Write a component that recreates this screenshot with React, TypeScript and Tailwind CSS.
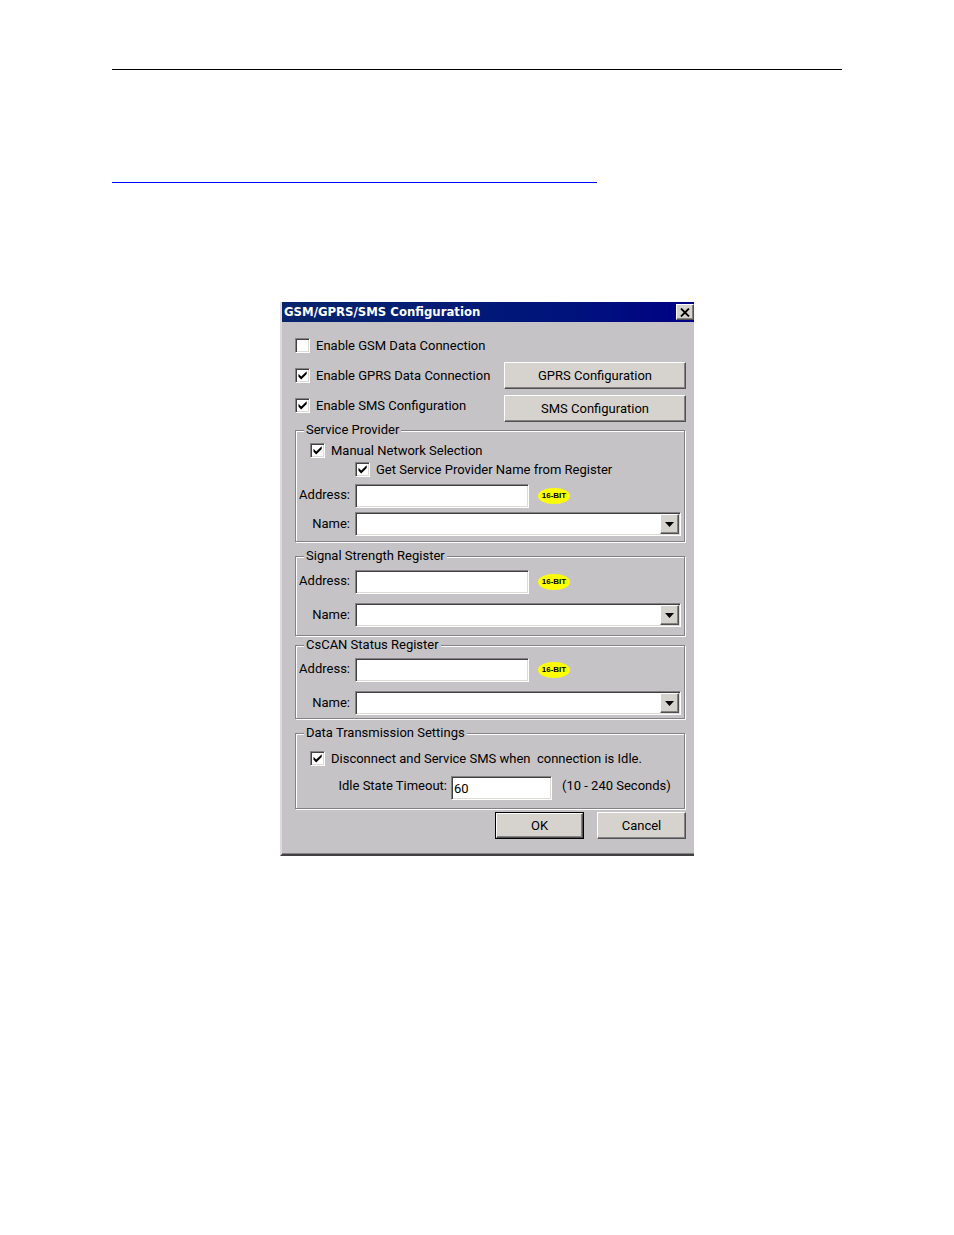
import React from "react";
import clsx from "clsx";

const SUNKEN =
  "border border-t-[#848284] border-l-[#848284] border-r-white border-b-white bg-white shadow-[inset_1px_1px_0_#424142,inset_-1px_-1px_0_#dedbd6]";
const RAISED =
  "border border-t-white border-l-white border-r-[#525152] border-b-[#525152] bg-[#d6d3ce] shadow-[inset_-1px_-1px_0_#848284]";

function Check({
  label,
  checked = false,
  className,
}: {
  label: string;
  checked?: boolean;
  className?: string;
}) {
  return (
    <label className={clsx("flex h-[19px] items-center gap-1.5 whitespace-pre", className)}>
      <span className="grid shrink-0 place-items-center">
        <input
          type="checkbox"
          defaultChecked={checked}
          className={clsx("peer col-start-1 row-start-1 size-[15px] appearance-none", SUNKEN)}
        />
        <svg
          viewBox="0 0 9 9"
          className="pointer-events-none invisible col-start-1 row-start-1 size-[9px] peer-checked:visible"
        >
          <path d="M0.5 2.8v3L3.2 8.4 8.7 3V0.2L3.2 5.5z" fill="#000" />
        </svg>
      </span>
      {label}
    </label>
  );
}

function PushButton({ children, className }: { children: React.ReactNode; className?: string }) {
  return (
    <button type="button" className={clsx("h-[27px]", RAISED, className)}>
      {children}
    </button>
  );
}

function Group({
  title,
  children,
  className,
}: {
  title: string;
  children: React.ReactNode;
  className?: string;
}) {
  return (
    <fieldset
      className={clsx(
        "mr-px min-w-0 border border-[#848284] pr-[3px] shadow-[inset_1px_1px_0_#fff,1px_1px_0_#fff]",
        className
      )}
    >
      <legend className="ml-2 bg-[#c6c3c6] px-0.5">{title}</legend>
      {children}
    </fieldset>
  );
}

function BitBadge() {
  return (
    <span className="ml-1 flex h-4 w-8 items-center justify-center rounded-[50%] bg-[#ffff00] font-['Liberation_Sans',Arial,sans-serif] text-[8px] leading-none font-bold">
      16-BIT
    </span>
  );
}

function RegisterFields({ id, className }: { id: string; className?: string }) {
  return (
    <div className={clsx("flex flex-col", className)}>
      <div className="flex h-6 items-center gap-[5px]">
        <label htmlFor={`${id}-address`} className="w-[54px] shrink-0 pb-0.5 text-right">
          Address:
        </label>
        <input
          id={`${id}-address`}
          type="text"
          className={clsx("h-6 w-[174px] px-1 outline-none", SUNKEN)}
        />
        <BitBadge />
      </div>
      <div className="flex h-6 items-center gap-[5px]">
        <label htmlFor={`${id}-name`} className="w-[54px] shrink-0 text-right">
          Name:
        </label>
        <div className="relative flex-1">
          <select
            id={`${id}-name`}
            className={clsx("block h-6 w-full appearance-none px-1 outline-none", SUNKEN)}
          />
          <span
            className={clsx(
              "pointer-events-none absolute inset-y-0.5 right-0.5 flex w-[19px] items-center justify-center",
              RAISED
            )}
          >
            <svg viewBox="0 0 9 5" className="h-[5px] w-[9px]">
              <path d="M0 0h9L4.5 5z" fill="#000" />
            </svg>
          </span>
        </div>
      </div>
    </div>
  );
}

function ConfigDialog() {
  return (
    <form className="w-[414px] border-b-2 border-l-2 border-b-[#424142] border-l-[#dedbde] bg-[#c6c3c6] pb-[15px] shadow-[inset_0_-1px_0_#848284]">
      <div className="flex h-5 items-center justify-between bg-linear-to-r from-[#08246b] to-[#000084] pl-0.5">
        <h1 className="font-['DejaVu_Sans_Condensed','Noto_Sans',sans-serif] text-[13px] font-bold text-white">
          GSM/GPRS/SMS Configuration
        </h1>
        <button
          type="button"
          aria-label="Close"
          className={clsx("flex h-4 w-[18px] items-center justify-center", RAISED)}
        >
          <svg viewBox="0 0 10 9" className="h-[9px] w-[10px]">
            <path d="M1 0.5L9 8.5M9 0.5L1 8.5" stroke="#000" strokeWidth="1.8" />
          </svg>
        </button>
      </div>

      <div className="pt-3.5 pr-2 pl-[13px]">
        <div className="flex justify-between">
          <div className="flex flex-col gap-[11px]">
            <Check label="Enable GSM Data Connection" />
            <Check label="Enable GPRS Data Connection" checked />
            <Check label="Enable SMS Configuration" checked />
          </div>
          <div className="flex w-[182px] flex-col gap-1.5 pt-[26px]">
            <PushButton>GPRS Configuration</PushButton>
            <PushButton>SMS Configuration</PushButton>
          </div>
        </div>

        <Group title="Service Provider" className="pt-[3px] pb-[5px]">
          <Check label="Manual Network Selection" checked className="ml-3.5" />
          <Check label="Get Service Provider Name from Register" checked className="ml-[59px]" />
          <RegisterFields id="provider" className="mt-[5px] gap-1" />
        </Group>

        <Group title="Signal Strength Register" className="mt-1.5 pt-1.5 pb-2">
          <RegisterFields id="signal" className="gap-[9px]" />
        </Group>

        <Group title="CsCAN Status Register" className="mt-px pt-[5px] pb-[3px]">
          <RegisterFields id="cscan" className="gap-[9px]" />
        </Group>

        <Group title="Data Transmission Settings" className="mt-1.5 pt-2 pb-2">
          <Check
            label="Disconnect and Service SMS when  connection is Idle."
            checked
            className="ml-3.5"
          />
          <div className="mt-2 flex h-6 items-center">
            <label htmlFor="idle" className="w-[151px] pb-1 text-right">
              Idle State Timeout:
            </label>
            <input
              id="idle"
              type="text"
              defaultValue="60"
              className={clsx("ml-1 h-6 w-[101px] px-0.5 outline-none", SUNKEN)}
            />
            <span className="ml-2.5 pb-1">(10 - 240 Seconds)</span>
          </div>
        </Group>

        <div className="mt-[3px] flex justify-end gap-[13px]">
          <div className="flex border border-black">
            <button type="button" className={clsx("h-[25px] w-[87px]", RAISED)}>
              OK
            </button>
          </div>
          <PushButton className="w-[89px]">Cancel</PushButton>
        </div>
      </div>
    </form>
  );
}

export default function App() {
  return (
    <main className="min-h-screen bg-white px-28 pt-[69px] font-[Roboto,'Liberation_Sans',sans-serif] text-[13px] leading-4 text-black">
      <hr className="border-black" />
      <hr className="mt-28 w-[485px] max-w-full border-[#0000ff]" />
      <div className="mt-[119px] flex justify-center pl-5">
        <ConfigDialog />
      </div>
    </main>
  );
}
